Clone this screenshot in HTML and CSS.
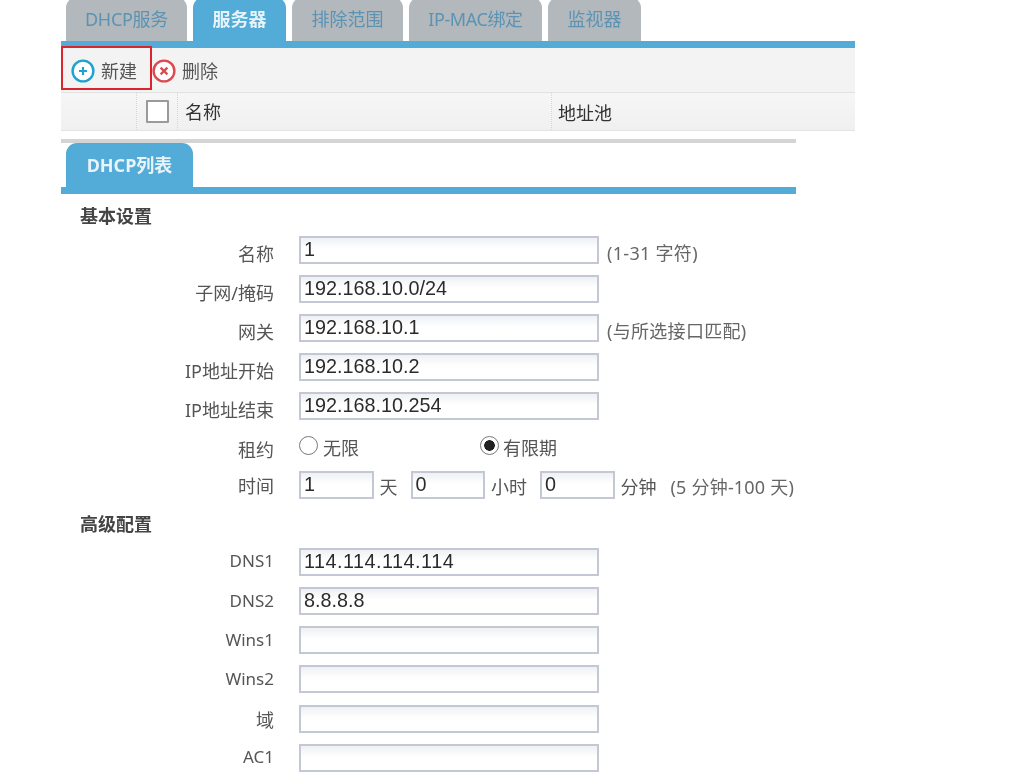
FILE: index.html
```html
<!DOCTYPE html>
<html lang="zh-CN">
<head>
<meta charset="utf-8">
<title>DHCP</title>
<link rel="stylesheet" href="styles.css">
</head>
<body>
<div class="page">
  <section class="top">
    <nav class="tabs">
      <a class="tab t1">DHCP服务</a>
      <a class="tab t2 active">服务器</a>
      <a class="tab t3">排除范围</a>
      <a class="tab t4">IP-MAC绑定</a>
      <a class="tab t5">监视器</a>
    </nav>
    <div class="toolbar">
      <span class="highlight"></span>
      <button class="tool new">
        <svg class="ico" viewBox="0 0 24 24"><circle cx="12" cy="12" r="10.4" fill="#fff" stroke="#1ea3d0" stroke-width="2.4"/><path d="M12 8v8M8 12h8" stroke="#1ea3d0" stroke-width="2.2"/></svg>
        <span>新建</span>
      </button>
      <button class="tool del">
        <svg class="ico" viewBox="0 0 24 24"><circle cx="12" cy="12" r="10.4" fill="#fff" stroke="#dc4a4f" stroke-width="2.4"/><path d="M8.6 8.6l6.8 6.8M15.4 8.6l-6.8 6.8" stroke="#dc4a4f" stroke-width="2.2"/></svg>
        <span>删除</span>
      </button>
    </div>
    <div class="thead">
      <div class="c c0"></div>
      <div class="c c1"><span class="check"></span></div>
      <div class="c c2">名称</div>
      <div class="c c3">地址池</div>
    </div>
  </section>

  <section class="panel">
    <nav class="subtabs"><a class="subtab">DHCP列表</a></nav>
    <h3 class="sect first">基本设置</h3>
    <div class="row"><label>名称</label><span class="inp">1</span><span class="hint">(1-31 字符)</span></div>
    <div class="row"><label>子网/掩码</label><span class="inp">192.168.10.0/24</span></div>
    <div class="row"><label>网关</label><span class="inp">192.168.10.1</span><span class="hint">(与所选接口匹配)</span></div>
    <div class="row"><label>IP地址开始</label><span class="inp">192.168.10.2</span></div>
    <div class="row"><label>IP地址结束</label><span class="inp">192.168.10.254</span></div>
    <div class="row"><label>租约</label>
      <span class="radio-a"><span class="radio"></span>无限</span>
      <span class="radio-b"><span class="radio on"></span>有限期</span>
    </div>
    <div class="row"><label class="tight">时间</label>
      <span class="inp small">1</span><span class="unit">天</span>
      <span class="inp small">0</span><span class="unit">小时</span>
      <span class="inp small">0</span><span class="unit">分钟</span><span class="range">(5 分钟-100 天)</span>
    </div>
    <h3 class="sect">高级配置</h3>
    <div class="row"><label class="latin">DNS1</label><span class="inp wide">114.114.114.114</span></div>
    <div class="row"><label class="latin">DNS2</label><span class="inp">8.8.8.8</span></div>
    <div class="row"><label class="latin">Wins1</label><span class="inp"></span></div>
    <div class="row"><label class="latin">Wins2</label><span class="inp"></span></div>
    <div class="row"><label class="tight">域</label><span class="inp"></span></div>
    <div class="row"><label class="latin">AC1</label><span class="inp"></span></div>
  </section>
</div>
</body>
</html>
```

FILE: styles.css
```css
* { box-sizing: border-box; }
html, body { margin: 0; padding: 0; background: #fff; overflow: hidden; }
body {
  height: 781px;
  font-family: "Noto Sans", "Noto Sans CJK SC", sans-serif;
  font-size: 18px;
  color: #555;
}
.page { padding-left: 61px; filter: blur(0.5px); }

.top { width: 794px; }
.tabs { display: flex; gap: 6px; height: 41px; padding-left: 5px; overflow: hidden; }
.tab {
  height: 50px;
  margin-top: -3px;
  padding-top: 10px;
  text-align: center;
  background: #b2b8bc;
  color: #5c93b3;
  border-radius: 11px 11px 0 0;
  line-height: 24px;
}
.t1 { width: 121px; letter-spacing: -0.3px; }
.t2 { width: 93px; }
.t3 { width: 111px; }
.t4 { width: 133px; letter-spacing: -0.4px; }
.t5 { width: 93px; }
.tab.active { background: #53abd7; color: #e8f4fa; font-weight: 700; }

.toolbar {
  position: relative;
  display: flex;
  align-items: center;
  height: 52px;
  border-top: 7px solid #53abd7;
  border-bottom: 1px solid #e2e2e2;
  background: #f3f3f3;
  padding-left: 10px;
}
.highlight {
  position: absolute;
  left: 0;
  top: -2px;
  width: 91px;
  height: 44px;
  border: 2px solid #d9262e;
  z-index: 2;
}
.tool {
  display: flex;
  align-items: center;
  gap: 6px;
  border: 0;
  padding: 0;
  background: none;
  font: inherit;
  color: #555;
}
.tool.new { width: 81px; }
.ico { width: 24px; height: 24px; flex: none; margin-top: 1px; }

.thead {
  display: flex;
  height: 38px;
  background: linear-gradient(#f6f6f6, #f0f0f0);
  border-bottom: 1px solid #e4e4e4;
  color: #333;
}
.c { display: flex; align-items: center; height: 37px; border-right: 1px dotted #d5d5d5; }
.c0 { width: 76px; }
.c1 { width: 41px; padding-left: 9px; }
.c2 { width: 374px; padding-left: 7px; padding-bottom: 2px; }
.c3 { flex: 1; padding-left: 6px; border-right: 0; }
.check { width: 23px; height: 23px; background: #fff; border: 2px solid #9a9a9a; border-radius: 1px; }

.panel { width: 735px; margin-top: 8px; border-top: 4px solid #d4d4d4; }
.subtabs { height: 51px; padding-left: 5px; border-bottom: 7px solid #53abd7; }
.subtab {
  display: block;
  width: 127px;
  height: 44px;
  line-height: 45px;
  text-align: center;
  background: #53abd7;
  color: #e8f4fa;
  font-weight: 700;
  border-radius: 11px 11px 0 0;
}
.sect { margin: 2px 0 0; height: 36px; padding-left: 19px; font-size: 18px; line-height: 36px; font-weight: 700; color: #444; }
.sect.first { margin: 0; height: 36px; line-height: 44px; }

.row { display: flex; align-items: center; height: 39.2px; white-space: nowrap; width: 800px; }
.row label { width: 213px; text-align: right; margin-right: 25px; padding-top: 6px; }
.row label.tight { padding-top: 0; }
.row label.latin { font-size: 17px; padding-top: 0; margin-bottom: 2px; }
.inp {
  display: block;
  width: 300px;
  height: 28px;
  padding-left: 3px;
  line-height: 23px;
  font-family: "Liberation Sans", sans-serif;
  font-size: 19.8px;
  color: #2b2b2b;
  background: linear-gradient(#eef0f4, #fff 45%);
  border: 2px solid #c4c8d4;
}
.inp.wide { letter-spacing: 0.5px; }
.inp.small { width: 74.5px; }
.hint { margin-left: 8px; padding-top: 5px; color: #666; letter-spacing: 0.3px; }
.unit { margin: 0 13px 0 6px; padding-top: 2px; }
.range { margin-left: 1px; padding-top: 2px; color: #666; letter-spacing: 0.2px; }
.radio-a, .radio-b { display: flex; align-items: center; gap: 5px; padding-top: 3px; }
.radio-a { width: 181px; }
.radio-b { gap: 4px; }
.radio {
  display: block;
  width: 19px;
  height: 19px;
  margin: -4px 0 0 0;
  border: 1.5px solid #777;
  border-radius: 50%;
  background: #fff;
}
.radio.on { background: radial-gradient(circle, #222 0 5px, #fff 5.6px); }
```
